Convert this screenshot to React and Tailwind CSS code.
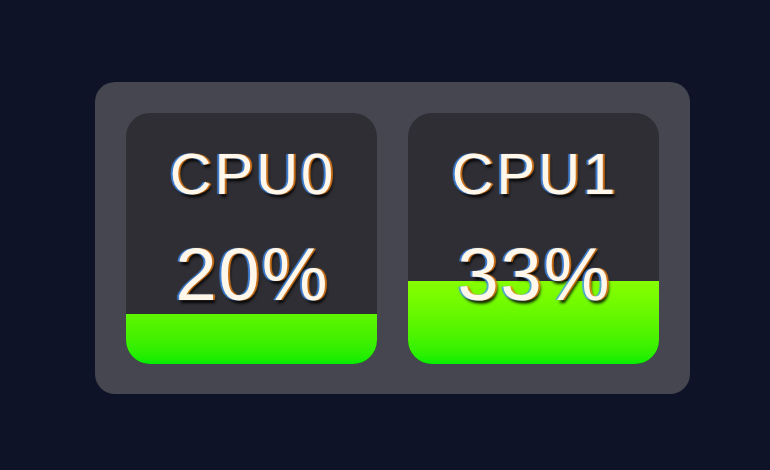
import React from "react";

const cpus = [
  { name: "CPU0", pct: 20, grad: "bg-gradient-to-b from-[#5ef500] to-[#00ec00]" },
  { name: "CPU1", pct: 33, grad: "bg-gradient-to-b from-[#86ff00] to-[#00ee00]" },
];

const shadow =
  "[text-shadow:-2px_0_1px_rgba(70,150,255,0.8),2px_0_1px_rgba(255,140,30,0.8),2px_3px_3px_rgba(0,0,0,0.9)]";

function Card({ name, pct, grad }) {
  return (
    <div className="relative w-[251px] h-[251px] rounded-[24px] bg-[#2e2e34] overflow-hidden">
      <div
        className={`absolute left-0 right-0 bottom-0 ${grad}`}
        style={{ height: `${pct}%` }}
      />
      <div className="relative flex flex-col items-center pt-[32px] text-[#fff8ea] font-['Liberation_Sans',Arial,sans-serif]">
        <div className={`text-[58px] leading-none tracking-[3px] pl-[3px] ${shadow}`}>{name}</div>
        <div className={`mt-[35px] text-[74px] leading-none tracking-[2px] pl-[2px] ${shadow}`}>{pct}%</div>
      </div>
    </div>
  );
}

export default function App() {
  return (
    <div className="w-[770px] h-[470px] bg-[#0e1328] pt-[82px] pl-[95px]">
      <div className="inline-flex gap-[31px] p-[31px] pb-[30px] rounded-[20px] bg-[#45464f]">
        {cpus.map((c) => (
          <Card key={c.name} {...c} />
        ))}
      </div>
    </div>
  );
}
